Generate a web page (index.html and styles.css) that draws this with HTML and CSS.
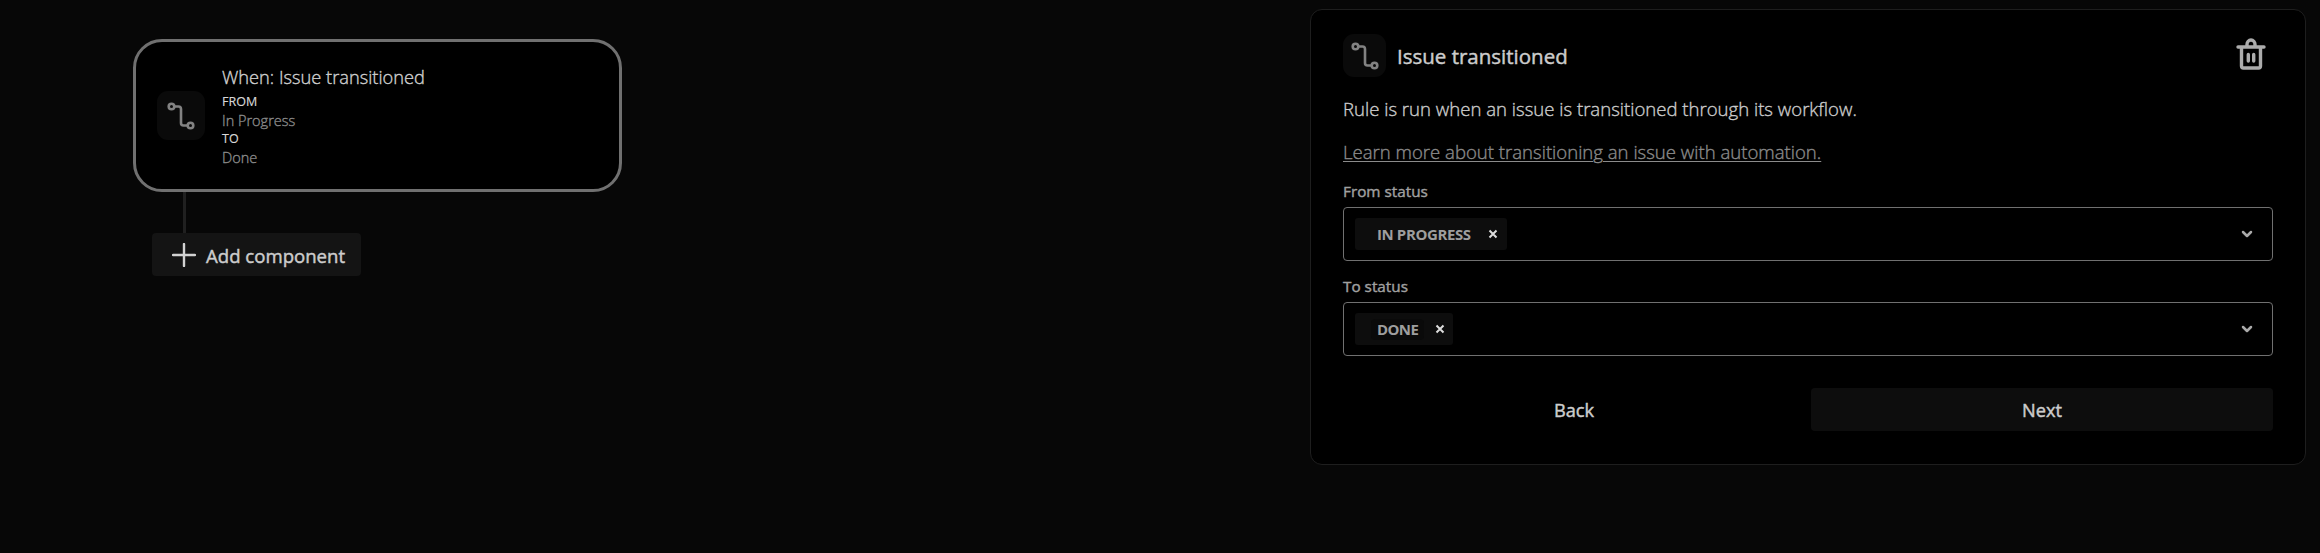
FILE: index.html
```html
<!DOCTYPE html>
<html lang="en">
<head>
<meta charset="utf-8">
<title>Automation rule</title>
<link rel="stylesheet" href="styles.css">
</head>
<body>
<main class="editor">
  <section class="flow">
    <article class="trigger">
      <div class="tile tile-lg">
        <svg class="route" viewBox="0 0 28 28"><circle cx="4.5" cy="4.5" r="2.8"/><path d="M7.5 4.5H11.5Q14 4.500 14 7V21Q14 23.500 16.500 23.500H20.500"/><circle cx="23.500" cy="23.500" r="2.800"/></svg>
      </div>
      <div class="trigger-text">
        <h2 class="trigger-title"><span>When: Issue transitioned</span></h2>
        <div class="key"><span>FROM</span></div>
        <div class="value"><span>In Progress</span></div>
        <div class="key"><span>TO</span></div>
        <div class="value"><span>Done</span></div>
      </div>
    </article>
    <div class="connector"></div>
    <button class="btn add"><svg class="plus" viewBox="0 0 24 24"><path d="M12 1V23M1 12H23"/></svg><span>Add component</span></button>
  </section>
  <aside class="panel">
    <header class="head">
      <div class="tile">
        <svg class="route" viewBox="0 0 28 28"><circle cx="4.5" cy="4.5" r="2.8"/><path d="M7.5 4.5H11.5Q14 4.500 14 7V21Q14 23.500 16.500 23.500H20.500"/><circle cx="23.500" cy="23.500" r="2.800"/></svg>
      </div>
      <h1 class="title"><span>Issue transitioned</span></h1>
      <svg class="trash" viewBox="0 0 30 34"><path d="M2 10H28M5.500 10V29Q5.500 31 7.500 31H22.500Q24.500 31 24.500 29V10M11 10V7.500a4 4.500 0 0 1 8 0V10M12.300 17.500V24M17.700 17.500V24"/></svg>
    </header>
    <p class="desc"><span>Rule is run when an issue is transitioned through its workflow.</span></p>
    <p class="learn"><a class="learn-link">Learn more about transitioning an issue with automation.</a></p>
    <div class="label"><span>From status</span></div>
    <div class="select">
      <div class="chip chip-a"><span class="lozenge">IN PROGRESS</span><svg class="x" viewBox="0 0 10 10"><path d="M1.500 1.500L8.500 8.500M8.500 1.500L1.500 8.500"/></svg></div>
      <svg class="chev" viewBox="0 0 12 8"><path d="M2 2L6 6L10 2"/></svg>
    </div>
    <div class="label"><span>To status</span></div>
    <div class="select">
      <div class="chip chip-b"><span class="lozenge">DONE</span><svg class="x" viewBox="0 0 10 10"><path d="M1.500 1.500L8.500 8.500M8.500 1.500L1.500 8.500"/></svg></div>
      <svg class="chev" viewBox="0 0 12 8"><path d="M2 2L6 6L10 2"/></svg>
    </div>
    <footer class="actions">
      <button class="btn back"><span>Back</span></button>
      <button class="btn next"><span>Next</span></button>
    </footer>
  </aside>
</main>
</body>
</html>
```
FILE: styles.css
```css
* { box-sizing: border-box; }
body { margin: 0; background: #000; font-family: "Open Sans", "Noto Sans", sans-serif; }
h1, h2, p { margin: 0; font-weight: inherit; }
span, a { white-space: nowrap; }
svg { display: block; flex: none; fill: none; stroke-linecap: round; stroke-linejoin: round; }
.editor { display: flex; justify-content: space-between; align-items: flex-start; width: 2320px; height: 553px; background: #070707; padding: 9px 14px 0 133px; }
.flow { padding-top: 30px; width: 489px; }
.trigger { display: flex; height: 153px; border: 3px solid #707070; border-radius: 29px; background: #000; padding: 22px; }
.tile { flex: none; width: 43px; height: 43px; border-radius: 11px; background: #0a0a0a; display: flex; align-items: center; justify-content: center; }
.tile-lg { width: 48px; height: 49px; margin-top: 27px; margin-left: -1px; }
.route { width: 28px; height: 28px; stroke: #828282; stroke-width: 2.6; }
.trigger-text { margin-left: 17px; }
.trigger-title { font-size: 18.25px; line-height: 26px; height: 28px; color: #d0d0d0; font-weight: 300; -webkit-text-stroke: 0.35px; }
.key { font-size: 12.5px; line-height: 18px; height: 18px; color: #d8d8d8; margin-top: 1px; -webkit-text-stroke: 0.15px; }
.value { font-size: 14.5px; line-height: 19px; height: 18px; color: #8a8a8a; font-weight: 300; -webkit-text-stroke: 0.35px; }
.connector { width: 3px; height: 41px; margin-left: 50px; background: #202020; }
.btn { display: flex; align-items: center; justify-content: center; height: 43px; padding: 0; border: 0; border-radius: 4px; background: #0d0d0d; color: #ccc; font: 400 18.2px "Open Sans", sans-serif; -webkit-text-stroke: 0.45px; }
.btn span { padding-top: 1px; }
.add { width: 209px; margin-left: 19px; background: #141414; gap: 10px; justify-content: flex-start; padding-left: 20px; font-size: 18.6px; }
.plus { width: 24px; height: 24px; stroke: #d2d2d2; stroke-width: 2.4; }
.panel { width: 996px; height: 456px; border: 1px solid #1e1e1e; border-radius: 12px; background: #000; padding: 24px 32px 0; }
.head { display: flex; align-items: center; height: 43px; }
.title { margin-left: 11px; font-size: 20.5px; color: #ccc; flex: 1; -webkit-text-stroke: 0.45px; }
.trash { width: 30px; height: 34px; stroke: #acacac; stroke-width: 3.400; margin: 0 7px 4px 0; }
.desc, .learn { font-size: 18.57px; line-height: 28px; font-weight: 300; color: #ccc; margin-top: 18px; -webkit-text-stroke: 0.35px; }
.learn { margin-top: 15px; color: #8b8b8b; }
.learn-link { text-decoration: underline; text-decoration-thickness: 1px; text-underline-offset: 2px; }
.label { font-size: 15.3px; line-height: 20px; color: #a0a0a0; margin-top: 15px; -webkit-text-stroke: 0.4px; }
.select { display: flex; align-items: center; justify-content: space-between; height: 54px; border: 1px solid #707070; border-radius: 4px; margin-top: 6px; padding: 0 19px 0 11px; }
.chip { display: flex; align-items: center; justify-content: space-between; height: 32px; padding: 0 9px 0 16px; border-radius: 3px; background: #0d0d0d; font-size: 15px; font-weight: 700; color: #9e9e9e; letter-spacing: -0.4px; }
.chip-a { width: 152px; }
.chip-b { width: 98px; letter-spacing: -0.6px; padding-right: 8px; }
.lozenge { padding: 0 6px; border-radius: 4px; line-height: 21px; }
.chip-b .lozenge { background: #0a0a0a; }
.x { width: 10px; height: 10px; stroke: #ddd; stroke-width: 2; stroke-linecap: butt; }
.chev { width: 12px; height: 8px; stroke: #aaa; stroke-width: 2.5; }
.actions { display: grid; grid-template-columns: 1fr 1fr; gap: 6px; margin-top: 32px; }
.back { background: transparent; }
```
